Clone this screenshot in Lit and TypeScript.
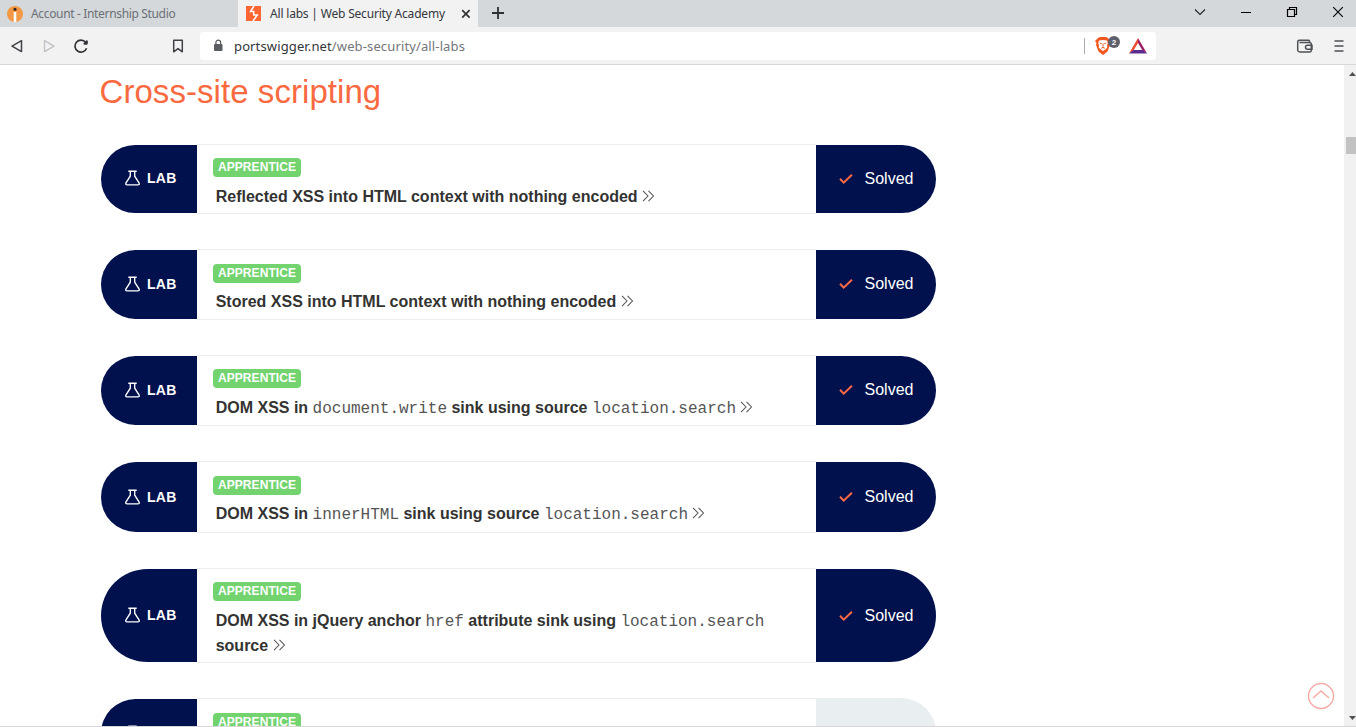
import { LitElement, html, css } from "lit";
import { customElement, property } from "lit/decorators.js";

type Part = string | { code: string };
interface Lab { height: number; offset: number; parts: Part[]; solved: boolean; }

const LABS: Lab[] = [
  { height: 70, offset: 13, solved: true, parts: ["Reflected XSS into HTML context with nothing encoded"] },
  { height: 71, offset: 14, solved: true, parts: ["Stored XSS into HTML context with nothing encoded"] },
  { height: 71, offset: 13, solved: true, parts: ["DOM XSS in ", { code: "document.write" }, " sink using source ", { code: "location.search" }] },
  { height: 72, offset: 14, solved: true, parts: ["DOM XSS in ", { code: "innerHTML" }, " sink using source ", { code: "location.search" }] },
  { height: 95, offset: 13, solved: true, parts: ["DOM XSS in jQuery anchor ", { code: "href" }, " attribute sink using ", { code: "location.search" }, " source"] },
  { height: 71, offset: 14, solved: false, parts: [] },
];

@customElement("browser-tabs")
export class BrowserTabs extends LitElement {
  static styles = css`
    :host { display: flex; height: 27px; background: #d4d8db; font: 12px "Noto Sans", sans-serif; }
    .tab { display: flex; align-items: center; box-sizing: border-box; height: 27px; width: 238px; padding-left: 7px; color: #6b7075; }
    .tab span { white-space: nowrap; line-height: 20px; margin-left: 8px; letter-spacing: -0.34px; }
    .tab.active { width: 240px; background: #f2f2f2; color: #34373c; }
    .tab.active span { letter-spacing: -0.19px; }
    .tab svg { flex: none; }
    .shut { margin-left: auto; margin-right: 7px; }
    .plus { margin: 7px 0 0 14px; }
    .controls { display: flex; margin-left: auto; }
    .controls svg { margin-top: 4px; margin-left: 30px; }
    .controls svg:last-child { margin-right: 10px; }
  `;
  render() {
    return html`
      <div class="tab">
        <svg width="16" height="16" viewBox="0 0 16 16"><circle cx="8" cy="8" r="8" fill="#f39844"/><circle cx="8" cy="3.3" r="1.5" fill="#2b2320"/><path d="M6.7 6h2.6v10H6.7z" fill="#fff"/></svg>
        <span>Account - Internship Studio</span>
      </div>
      <div class="tab active">
        <svg width="17" height="17" viewBox="0 0 17 17"><path d="M1 1h15v15H1z" fill="#ff6633"/><path d="M9 1 5.500 6.500h3.200v3.400h3.600L8 16M5.500 6.500h3.500" fill="none" stroke="#fff" stroke-width="1.500"/></svg>
        <span>All labs | Web Security Academy</span>
        <svg class="shut" width="10" height="10" viewBox="0 0 10 10"><path d="m1.2 1.2 7.4 7.4m0-7.4L1.2 8.6" stroke="#333" stroke-width="1.7"/></svg>
      </div>
      <svg class="plus" width="12" height="12" viewBox="0 0 12 12"><path d="M6 0v12M0 6h12" stroke="#2d2f33" stroke-width="1.8"/></svg>
      <div class="controls">
        <svg width="16" height="16" viewBox="0 0 16 16"><path d="m3 5.5 5 5 5-5" fill="none" stroke="#222" stroke-width="1.1"/></svg>
        <svg width="16" height="16" viewBox="0 0 16 16"><path d="M3 8.5h10" stroke="#000"/></svg>
        <svg width="16" height="16" viewBox="0 0 16 16"><path d="M3.500 5.500h7v7h-7zM5.500 5.500v-2h7v7h-2" fill="none" stroke="#000" stroke-width="1.2"/></svg>
        <svg width="16" height="16" viewBox="0 0 16 16"><path d="m3.200 3.200 9.600 9.600m0-9.600-9.600 9.600" stroke="#000" stroke-width="1.1"/></svg>
      </div>`;
  }
}

@customElement("browser-toolbar")
export class BrowserToolbar extends LitElement {
  static styles = css`
    :host { display: flex; box-sizing: border-box; height: 38px; background: #f2f2f2; border-bottom: 1px solid #d5d7d9; padding: 5px 0 5px 9px; align-items: center; }
    svg { flex: none; display: block; }
    .fwd { margin-left: 16px; }
    .reload { margin-left: 16px; }
    .mark { margin-left: 81px; }
    .address { display: flex; align-items: center; box-sizing: border-box; width: 956px; height: 28px; margin-left: 14px; padding-left: 12px; background: #fff; border-radius: 3px; font: 13px "Noto Sans", sans-serif; color: #73767a; }
    .url { margin-left: 10px; line-height: 20px; white-space: nowrap; letter-spacing: 0.13px; }
    .url b { font-weight: 400; color: #33363a; }
    .rule { width: 1px; height: 16px; background: #aaadb2; margin-left: auto; }
    .brave { margin-left: 9px; }
    .bat { margin: 0 9px 0 9px; }
    .wallet { margin-left: auto; }
    .menu { margin: 0 11px 0 19px; }
    .count { font: bold 8px "Liberation Sans", Arial, sans-serif; fill: #fff; }
  `;
  render() {
    return html`
      <svg width="16" height="16" viewBox="0 0 16 16"><path d="M12.500 2.600v11L3 8.100z" fill="none" stroke="#3f4247" stroke-width="1.5" stroke-linejoin="round"/></svg>
      <svg class="fwd" width="16" height="16" viewBox="0 0 16 16"><path d="M3.500 2.600v11L13 8.100z" fill="none" stroke="#bfc1c4" stroke-width="1.3" stroke-linejoin="round"/></svg>
      <svg class="reload" width="16" height="16" viewBox="0 0 16 16"><path d="M12.600 4.300A6 6 0 1 0 13.600 10.200" fill="none" stroke="#303236" stroke-width="1.700"/><path d="M13.200 2.400q1.600-.4 1.600 1v1.800q0 1.500-1.500 1.500h-1.600q-1.400 0-1.200-1.500z" fill="#303236"/></svg>
      <svg class="mark" width="16" height="16" viewBox="0 0 16 16"><path d="M3.700 2.200h8.600v11.600L8 10.600l-4.300 3.200z" fill="none" stroke="#3f4247" stroke-width="1.500" stroke-linejoin="round"/></svg>
      <div class="address">
        <svg width="12" height="14" viewBox="0 0 12 14"><rect x="2" y="5" width="8.500" height="7" rx="1" fill="#5a5d62"/><path d="M3.900 6V3.500a2.350 2.350 0 0 1 4.700 0V6" fill="none" stroke="#5a5d62" stroke-width="1.300"/></svg>
        <span class="url"><b>portswigger.net</b>/web-security/all-labs</span>
        <span class="rule"></span>
        <svg class="brave" width="26" height="22" viewBox="0 0 26 22">
          <path d="m4 3 2-1h6l2 1 2 3-.5 2 .5 2-2.500 6.500L9 20l-4.500-3.500L2 10l.5-2L1 6z" fill="#f4571f"/>
          <path d="m5 5.500 4-.6 4 .6.8 3-.8 1.500.3 2.500-2 2L9 16l-2.300-1.500-2-2L5 10l-.8-1.500z" fill="#fff"/>
          <path d="m5.700 8 2 .7m4.600-.7-2 .7M9 8.500v3.300M7.200 13.300 9 12.400l1.800.9" fill="none" stroke="#f4571f"/>
          <circle cx="20" cy="7" r="6" fill="#5d606c"/><text class="count" x="17.800" y="9.900">2</text>
        </svg>
        <svg class="bat" width="18" height="16" viewBox="0 0 18 16"><path d="M9 0v5L4.500 12.500 0 15.500z" fill="#f04a32"/><path d="M9 0v5l4.500 7.500 4.500 3z" fill="#9e1f63"/><path d="M0 15.500 4.500 12h9l4.500 3.500z" fill="#5a2d91"/></svg>
      </div>
      <svg class="wallet" width="18" height="16" viewBox="0 0 18 16"><path d="M13.500 4.500V3.300a1 1 0 0 0-1-1H3.300a1.600 1.600 0 0 0-1.600 1.600v8a2 2 0 0 0 2 2h10.100a1.500 1.500 0 0 0 1.500-1.500V6a1.500 1.500 0 0 0-1.500-1.500H3.500M16 7.200h-4.500a2 2 0 0 0 0 4H16z" fill="none" stroke="#4e5156" stroke-width="1.500"/></svg>
      <svg class="menu" width="12" height="14" viewBox="0 0 12 14"><path d="M1.500 2h9M1.500 7h9M1.500 12h9" stroke="#4e5156" stroke-width="1.500"/></svg>`;
  }
}

@customElement("lab-row")
export class LabRow extends LitElement {
  @property({ attribute: false }) lab!: Lab;
  static styles = css`
    :host { display: block; font-family: "Liberation Sans", Arial, sans-serif; }
    .row { display: flex; box-sizing: border-box; width: 835px; padding-bottom: 1px; padding-top: 1px; }
    .flag { display: flex; align-items: center; box-sizing: border-box; width: 96px; padding-left: 24px; padding-bottom: 1.500px; background: #00114d; border-radius: 48px 0 0 48px; color: #fff; font-weight: 700; font-size: 14px; }
    .flag svg { margin-right: 7px; }
    .flag span { letter-spacing: 0.3px; }
    .row.even .flag { padding-bottom: 0; }
    .body { box-sizing: border-box; width: 619px; margin: -1px 0; border: solid #eaecee; border-width: 1px 0; padding-left: 16px; padding-right: 24px; }
    .badge { display: block; box-sizing: border-box; width: 88px; height: 19px; border-radius: 4px; background: #72d36f; color: #fff; font-weight: 700; font-size: 12px; line-height: 18px; text-align: center; letter-spacing: 0.08px; }
    .title { margin: 0 0 0 2.700px; padding-top: 7px; font-size: 16px; font-weight: 700; line-height: 25px; color: #333332; }
    .high .title { padding-top: 6px; }
    code { font: 400 16px/20px "Liberation Mono", "Courier New", monospace; color: #555; }
    .more { display: inline-block; }
    .state { display: flex; align-items: center; box-sizing: border-box; width: 120px; padding-left: 23px; padding-bottom: 1px; background: #00114d; border-radius: 0 48px 48px 0; color: #fff; font-size: 16px; }
    .row.tall .state { padding-bottom: 0; }
    .state svg { margin-right: 11.500px; }
    .state.open { background: #e9eef1; margin-top: -1px; }
  `;
  render() {
    const { height, offset, parts, solved } = this.lab;
    const size = height > 90 ? "tall" : height === 72 ? "even" : "";
    return html`<div class="row ${size} ${offset === 14 ? "high" : ""}" style="height:${height}px">
      <div class="flag">
        <svg width="15" height="16" viewBox="0 0 15 16"><path d="M3.300 1.200h8.400M5.300 1.200v5L1 12.900q-.9 2 1.300 2h10.400q2.200 0 1.300-2L9.700 6.200v-5" fill="none" stroke="#fff" stroke-width="1.350"/></svg>
        <span>LAB</span>
      </div>
      <div class="body" style="padding-top:${offset}px">
        <span class="badge">APPRENTICE</span>
        ${parts.length
          ? html`<div class="title">${parts.map((p) => (typeof p === "string" ? p : html`<code>${p.code}</code>`))}
          <svg class="more" width="13" height="12" viewBox="0 0 13 12"><path d="m1 .8 5 5.200-5 5.200M6.500.8l5 5.200-5 5.200" fill="none" stroke="#555" stroke-width="1.050"/></svg></div>`
          : ""}
      </div>
      ${solved
        ? html`<div class="state"><svg width="14" height="12" viewBox="0 0 14 12"><path d="m1 5.800 3.700 3.800 8.200-7.900" fill="none" stroke="#ff6a45" stroke-width="2"/></svg><span>Solved</span></div>`
        : html`<div class="state open"></div>`}
    </div>`;
  }
}

@customElement("app-root")
export class AppRoot extends LitElement {
  static styles = css`
    :host { display: flex; flex-direction: column; position: relative; height: 727px; overflow: hidden; background: #fff; }
    .view { display: flex; flex: 1; min-height: 0; overflow: hidden; }
    .page { flex: 1; padding-left: 101px; overflow: hidden; }
    h1 { margin: 6px 0 32px -1.500px; font: 400 33px/41px "Liberation Sans", Arial, sans-serif; letter-spacing: 0.06px; color: #f96a40; }
    .labs { display: flex; flex-direction: column; gap: 35px; }
    .scroll { display: flex; flex-direction: column; width: 12px; background: #f1f1f1; }
    .scroll svg { display: block; flex: none; }
    .thumb { width: 10px; margin: 55px 0 0 2px; height: 17px; background: #c2c2c2; }
    .scroll .down { margin-top: auto; margin-bottom: 6px; }
    .top { position: absolute; left: 1307px; top: 682px; }
    .edge { position: absolute; left: 0; right: 0; bottom: 0; height: 1px; background: #d8d5d8; }
  `;
  render() {
    return html`
      <browser-tabs></browser-tabs>
      <browser-toolbar></browser-toolbar>
      <div class="view">
        <main class="page">
          <h1>Cross-site scripting</h1>
          <div class="labs">${LABS.map((lab) => html`<lab-row .lab=${lab}></lab-row>`)}</div>
        </main>
        <div class="scroll">
          <svg width="12" height="17" viewBox="0 0 12 17"><path d="m5 11 3.500-4 3.500 4z" fill="#505050"/></svg>
          <div class="thumb"></div>
          <svg class="down" width="12" height="8" viewBox="0 0 12 8"><path d="m5 3 3.500 4L12 3z" fill="#505050"/></svg>
        </div>
      </div>
      <svg class="top" width="28" height="28" viewBox="0 0 28 28"><circle cx="14" cy="14" r="12.500" fill="#fff" stroke="#f7aaa4" stroke-width="1.400"/><path d="m6 16 8-7 8 7" fill="none" stroke="#f7aaa4" stroke-width="1.500"/></svg>
      <div class="edge"></div>`;
  }
}
